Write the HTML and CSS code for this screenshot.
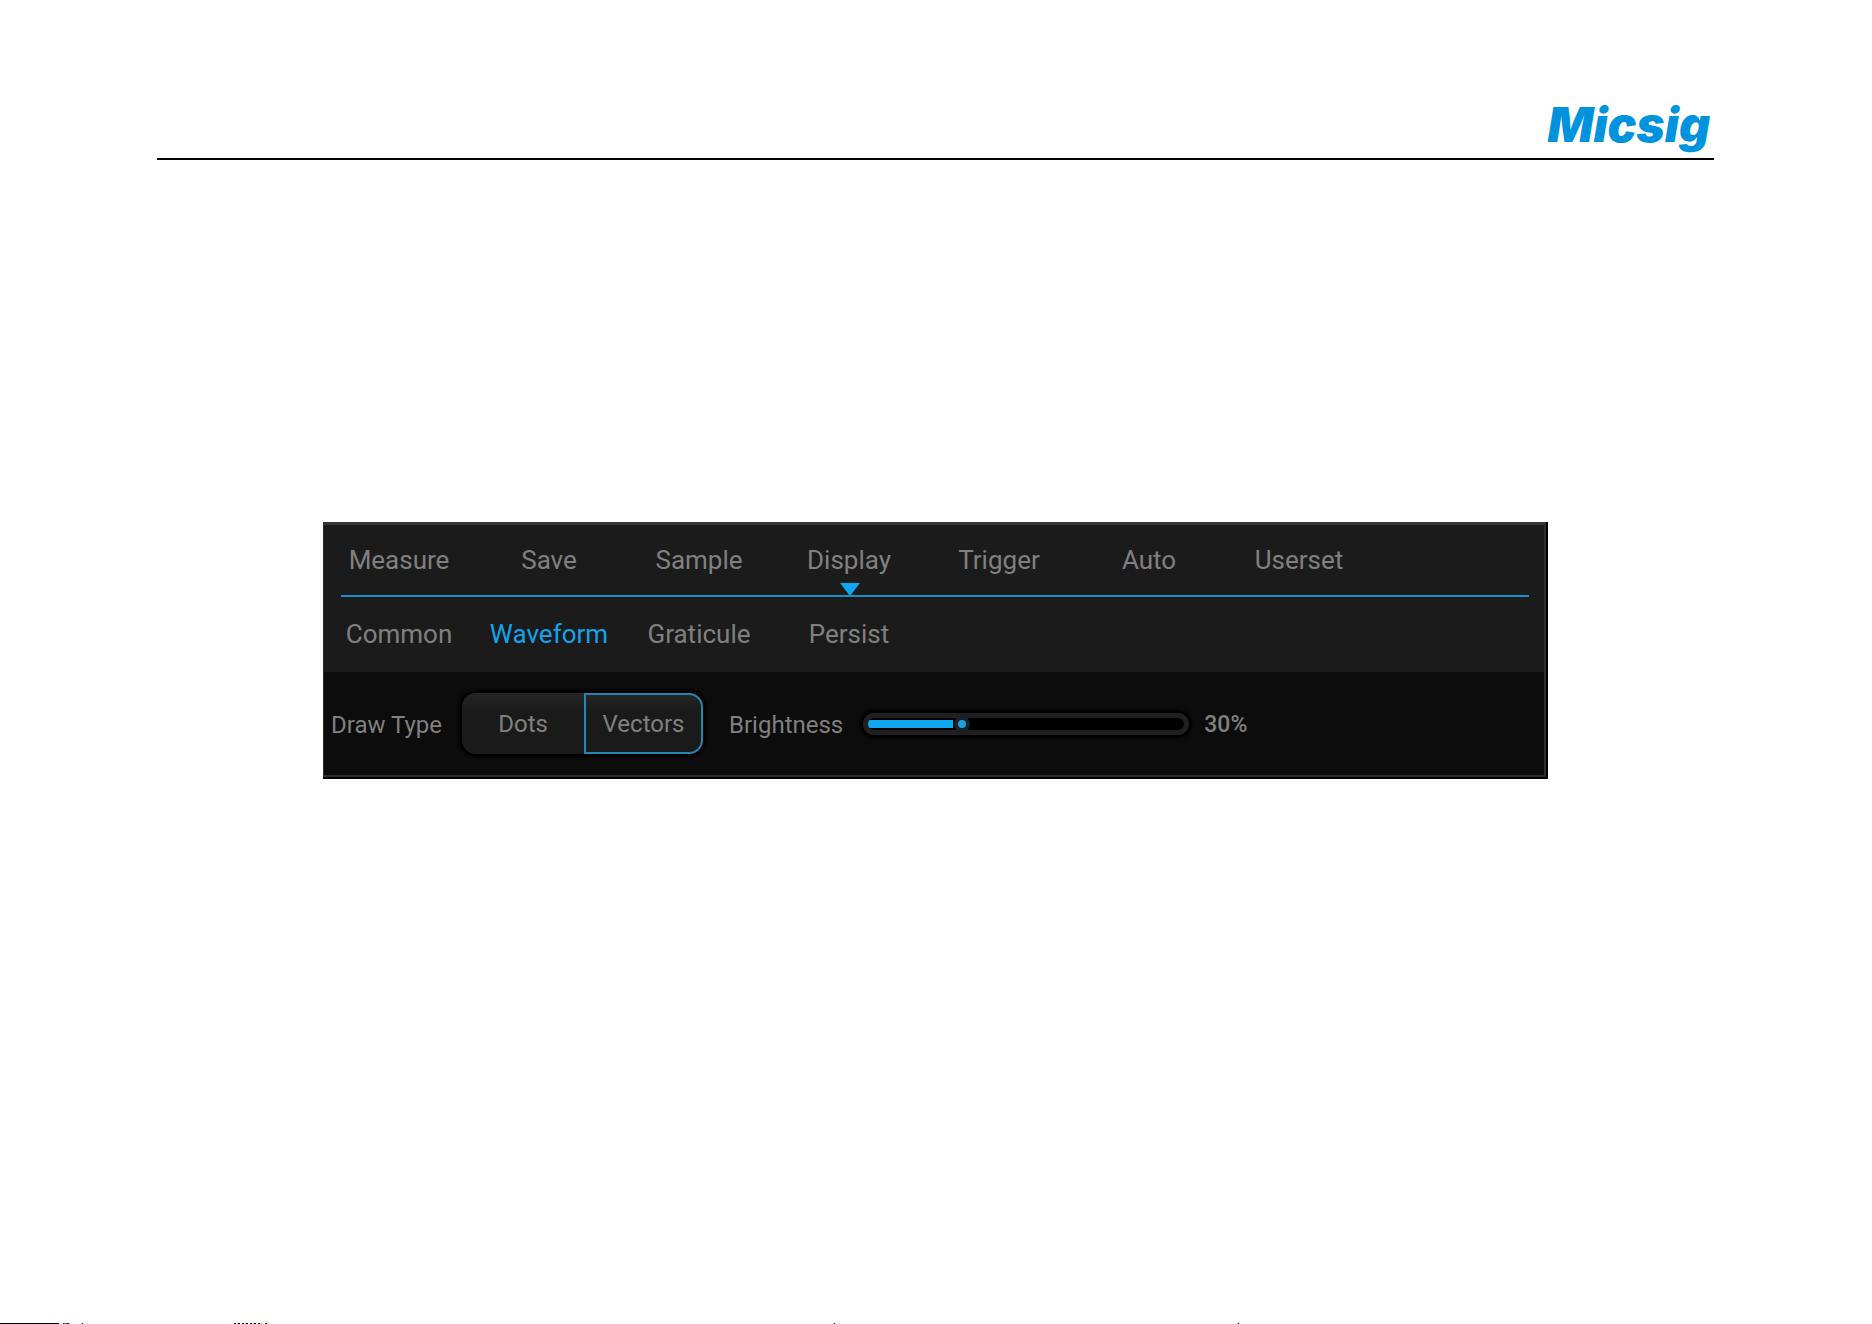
FILE: index.html
```html
<!DOCTYPE html>
<html lang="en">
<head>
<meta charset="utf-8">
<title>Micsig – Display settings</title>
<link rel="stylesheet" href="styles.css">
</head>
<body>
<header class="page-header"><span class="brand">Micsig</span></header>
<main class="content">
  <section class="panel" aria-label="Display settings">
    <div class="menus">
      <nav class="tabs" aria-label="Main menu">
        <button class="tab" type="button">Measure</button>
        <button class="tab" type="button">Save</button>
        <button class="tab" type="button">Sample</button>
        <button class="tab tab-open" type="button">Display</button>
        <button class="tab" type="button">Trigger</button>
        <button class="tab" type="button">Auto</button>
        <button class="tab" type="button">Userset</button>
      </nav>
      <div class="divider"></div>
      <nav class="tabs subtabs" aria-label="Display menu">
        <button class="tab" type="button">Common</button>
        <button class="tab tab-active" type="button">Waveform</button>
        <button class="tab" type="button">Graticule</button>
        <button class="tab" type="button">Persist</button>
      </nav>
    </div>
    <div class="settings">
      <span class="label" id="draw-type">Draw Type</span>
      <div class="segments" role="group" aria-labelledby="draw-type">
        <button class="segment" type="button">Dots</button>
        <button class="segment segment-on" type="button" aria-pressed="true">Vectors</button>
      </div>
      <label class="label" for="brightness">Brightness</label>
      <input class="slider" id="brightness" type="range" min="0" max="100" value="30">
      <output class="value" for="brightness">30%</output>
    </div>
  </section>
</main>
<footer class="page-edge"></footer>
</body>
</html>
```
FILE: styles.css
```css
* { box-sizing: border-box; }

body {
  margin: 0;
  min-height: 100vh;
  display: flex;
  flex-direction: column;
  background: #fff;
  color: #808080;
  font-family: Roboto, "Liberation Sans", sans-serif;
}

button {
  margin: 0;
  padding: 0;
  border: 0;
  background: none;
  color: inherit;
  font: inherit;
}

.page-header {
  display: flex;
  justify-content: flex-end;
  margin: 96px 158px 0 157px;
  padding-right: 4px;
  border-bottom: 2px solid #000;
}

.brand {
  height: 62px;
  color: #0093dd;
  font: italic 900 48px/58px Inter, sans-serif;
}

.content {
  padding: 362px 324px 0 323px;
}

.panel {
  border: solid #2d2d2d;
  border-width: 3px 2px 2px 1px;
  border-top-color: #363636;
  box-shadow: 2px 0 0 #000, 0 2px 0 #000, 2px 2px 0 #000;
  margin-right: 2px;
  background: #0c0c0c;
}

.menus {
  height: 147px;
  background: #1b1b1b;
}

.tabs {
  display: flex;
  font-size: 26px;
  line-height: 70px;
}

.subtabs { padding-top: 2px; }

.tab {
  position: relative;
  width: 150px;
  height: 70px;
}

.tab-active { color: #14a3ea; }

.tab-open::after {
  content: "";
  position: absolute;
  left: 66px;
  bottom: -1px;
  border: solid transparent;
  border-width: 13px 10px 0;
  border-top-color: #0fa6f2;
}

.divider {
  height: 2px;
  margin: 0 15px 0 17px;
  background: #1b8fc6;
}

.settings {
  display: flex;
  align-items: center;
  height: 103px;
  padding-left: 7px;
  font-size: 24px;
}

.label, .value { padding-top: 2px; }

.segments {
  display: flex;
  margin: 0 26px 0 20px;
  border-radius: 14px;
  box-shadow: 0 0 3px 3px #000;
}

.segment {
  width: 122px;
  height: 61px;
  border-radius: 14px 0 0 14px;
  background: linear-gradient(#252525, #1a1a1a 30%);
}

.segment-on {
  width: 119px;
  border: 2px solid #2487b0;
  border-radius: 0 14px 14px 0;
}

.slider {
  width: 326px;
  height: 22px;
  margin: 0 15px 0 20px;
  padding: 0 14px 0 0;
  appearance: none;
  border: 5px solid #202020;
  border-radius: 11px;
  background: linear-gradient(#0fa6f2, #0fa6f2) 0 50% / 85px 8px no-repeat #000;
  box-shadow: 0 0 3px 3px #000;
}

.slider::-webkit-slider-thumb {
  appearance: none;
  width: 16px;
  height: 16px;
  border: 4px solid #14232b;
  border-radius: 8px;
  background: #22a0dc;
}

.value {
  font-size: 23px;
  font-weight: 500;
}

.page-edge {
  height: 1px;
  margin-top: auto;
  background:
    linear-gradient(#000, #000) 0 0 / 58px 1px no-repeat,
    linear-gradient(#00f, #00f) 58px 0 / 1px 1px no-repeat,
    linear-gradient(90deg, #300, #f40 30%, #0aa 50%, #000 70%, #8ff) 63px 0 / 7px 1px no-repeat,
    linear-gradient(90deg, #da6 50%, #00c 50%) 81px 0 / 2px 1px no-repeat,
    repeating-linear-gradient(90deg, #008 0 2px, #fff 2px 3px, #3cc 3px 4px, #000 4px 6px, #fff 6px 8px) 234px 0 / 28px 1px no-repeat,
    linear-gradient(90deg, #e22 50%, #00c 50%) 265px 0 / 2px 1px no-repeat,
    linear-gradient(90deg, #da6 50%, #00c 50%) 833px 0 / 2px 1px no-repeat,
    linear-gradient(90deg, #da6 50%, #00c 50%) 1237px 0 / 2px 1px no-repeat;
}
```
